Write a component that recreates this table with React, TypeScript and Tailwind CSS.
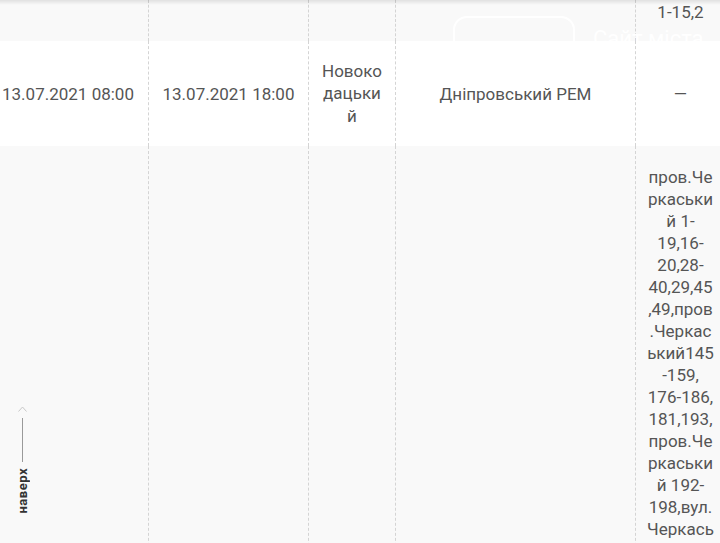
import React from 'react';

const cell = 'shrink-0 flex items-center justify-center text-center px-[12px]';
const wrap = 'w-full break-words [overflow-wrap:anywhere]';
const dash = 'border-l border-dashed border-[#d4d4d4]';

const ADDRESS =
  'пров.Черкаський 1-19,16-20,28-40,29,45,49,пров.Черкаський145-159, 176-186, 181,193, пров.Черкаський 192-198,вул.Черкаська 1-21';

const App: React.FC = () => {
  return (
    <div className="relative w-[720px] h-[543px] overflow-hidden bg-white text-[#555] text-[17px] leading-[22px] font-['Roboto','Liberation_Sans',sans-serif]">
      <div className="ml-[-12px] w-max flex flex-col">
        {/* tail of previous row */}
        <div className="relative flex h-[41px] bg-[#f9f9f9] overflow-hidden">
          <div className="shrink-0 w-[160px]" />
          <div className={`shrink-0 w-[160px] ${dash}`} />
          <div className={`shrink-0 w-[87px] ${dash}`} />
          <div className={`shrink-0 w-[240px] ${dash}`} />
          <div className={`shrink-0 w-[90px] ${dash} flex items-end justify-center pb-[18px]`}>1-15,2</div>
          {/* faint watermark */}
          <div className="absolute left-[465px] top-[16px] w-[122px] h-[50px] rounded-[14px] border-2 border-white" />
          <div className="absolute left-[605px] top-[28px] text-[22px] text-white">Сайт міста</div>
        </div>

        {/* row */}
        <div className="flex h-[105px] bg-white">
          <div className={`w-[160px] ${cell}`}>
            <div className={wrap}>13.07.2021 08:00</div>
          </div>
          <div className={`w-[160px] ${cell} ${dash}`}>
            <div className={wrap}>13.07.2021 18:00</div>
          </div>
          <div className={`w-[87px] ${cell} ${dash}`}>
            <div className={`${wrap} leading-[22.5px]`}>Новокодацький</div>
          </div>
          <div className={`w-[240px] ${cell} ${dash}`}>
            <div className={wrap}>Дніпровський РЕМ</div>
          </div>
          <div className={`w-[90px] ${cell} ${dash}`}>
            <div className={wrap}>—</div>
          </div>
        </div>

        {/* next row */}
        <div className="flex h-[420px] bg-[#f9f9f9]">
          <div className="shrink-0 w-[160px]" />
          <div className={`shrink-0 w-[160px] ${dash}`} />
          <div className={`shrink-0 w-[87px] ${dash}`} />
          <div className={`shrink-0 w-[240px] ${dash}`} />
          <div className={`shrink-0 w-[90px] ${dash} px-[11px] pt-[20px] text-center break-words [overflow-wrap:anywhere]`}>
            {ADDRESS}
          </div>
        </div>
      </div>

      {/* header shadow */}
      <div className="absolute top-0 left-0 right-0 h-[5px] bg-gradient-to-b from-black/10 to-transparent" />

      {/* back to top */}
      <div className="absolute left-[14px] top-[406px] flex flex-col items-center w-[17px]">
        <svg width="9" height="6" viewBox="0 0 9 6" className="text-[#c8c8c8]">
          <path d="M0.5 5.5 L4.5 1 L8.5 5.5" fill="none" stroke="currentColor" strokeWidth="1" />
        </svg>
        <div className="w-px h-[44px] bg-[#9a9a9a] mt-[6px]" />
        <div className="mt-[6px] [writing-mode:vertical-rl] rotate-180 text-[13px] leading-[15px] font-bold text-[#333] tracking-[0.5px]">
          наверх
        </div>
      </div>
    </div>
  );
};

export default App;
